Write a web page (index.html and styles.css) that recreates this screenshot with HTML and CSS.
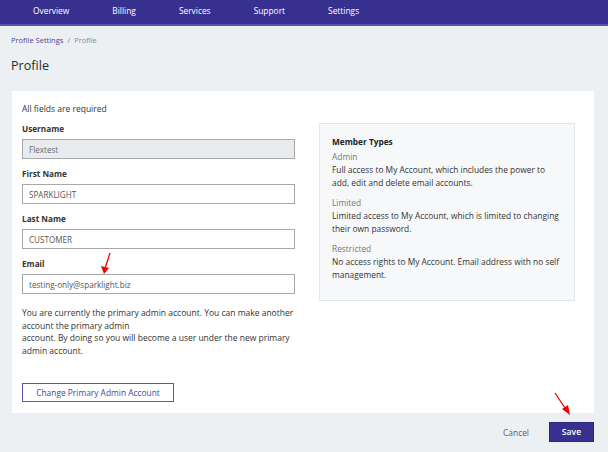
FILE: index.html
```html
<!DOCTYPE html>
<html>
<head>
<meta charset="utf-8">
<link rel="stylesheet" href="styles.css">
</head>
<body>
<nav class="topnav">
  <a class="nav-item">Overview</a>
  <a class="nav-item">Billing</a>
  <a class="nav-item">Services</a>
  <a class="nav-item">Support</a>
  <a class="nav-item">Settings</a>
</nav>
<main class="page">
  <div class="crumbs"><a class="crumb-link">Profile Settings</a><span class="crumb-sep">/</span><span class="crumb-cur">Profile</span></div>
  <h1 class="title">Profile</h1>
  <section class="card">
    <div class="form-col">
      <p class="req">All fields are required</p>
      <div class="field">
        <label class="lbl">Username</label>
        <input class="inp inp-disabled" value="Flextest" disabled>
      </div>
      <div class="field">
        <label class="lbl">First Name</label>
        <input class="inp" value="SPARKLIGHT">
      </div>
      <div class="field">
        <label class="lbl">Last Name</label>
        <input class="inp" value="CUSTOMER">
      </div>
      <div class="field">
        <label class="lbl">Email</label>
        <input class="inp" value="testing-only@sparklight.biz">
      </div>
      <p class="note">You are currently the primary admin account. You can make another account the primary admin<br>account. By doing so you will become a user under the new primary admin account.</p>
      <button class="btn-outline">Change Primary Admin Account</button>
    </div>
    <aside class="types">
      <h2 class="types-title">Member Types</h2>
      <div class="type">
        <div class="type-name">Admin</div>
        <div class="type-desc">Full access to My Account, which includes the power to add, edit and delete email accounts.</div>
      </div>
      <div class="type">
        <div class="type-name">Limited</div>
        <div class="type-desc">Limited access to My Account, which is limited to changing their own password.</div>
      </div>
      <div class="type">
        <div class="type-name">Restricted</div>
        <div class="type-desc">No access rights to My Account. Email address with no self management.</div>
      </div>
    </aside>
  </section>
  <div class="actions">
    <a class="cancel">Cancel</a>
    <button class="btn-save">Save</button>
  </div>
</main>
<svg class="annot" width="608" height="452" viewBox="0 0 608 452">
  <line x1="110" y1="253" x2="105.5" y2="267" stroke="#f00000" stroke-width="1.3"/>
  <polygon points="101,266 109,268 104,274" fill="#f00000"/>
  <line x1="555" y1="393" x2="565" y2="408" stroke="#f00000" stroke-width="1.3"/>
  <polygon points="562,409 568,405 570,415" fill="#f00000"/>
</svg>
</body>
</html>
```
FILE: styles.css
```css
* { box-sizing: border-box; }
html, body { margin: 0; padding: 0; }
body {
  background: #edf0f3;
  font-family: "Open Sans", "Noto Sans", sans-serif;
  color: #333;
  width: 608px;
  height: 452px;
  overflow: hidden;
  position: relative;
}
.topnav {
  display: flex;
  height: 26px;
  background: #37308f;
  border-bottom: 2px solid #5a53ad;
  padding-left: 33px;
  gap: 43px;
  align-items: center;
}
.nav-item {
  color: #fff;
  font-size: 8.4px;
  line-height: 14px;
  margin-top: -2px;
}
.page {
  padding: 0 14px 0 12px;
}
.crumbs {
  font-size: 7.5px;
  line-height: 12px;
  padding-top: 8px;
  margin-left: -1px;
  display: flex;
  gap: 4px;
}
.crumb-link { color: #4a4493; }
.crumb-sep, .crumb-cur { color: #8a8a8a; }
.title {
  font-weight: 400;
  font-size: 12.6px;
  line-height: 20px;
  margin: 10px 0 0 -1px;
  color: #2b2b2b;
}
.card {
  margin-top: 15px;
  background: #fff;
  padding: 11px 19px 11px 10px;
  display: flex;
  align-items: flex-start;
  gap: 24px;
}
.form-col {
  width: 273px;
  flex: none;
  display: flex;
  flex-direction: column;
}
.req {
  margin: 0 0 9px;
  font-size: 8.5px;
  line-height: 13px;
  color: #333;
}
.field {
  display: flex;
  flex-direction: column;
  gap: 5px;
  margin-bottom: 10px;
}
.lbl {
  font-size: 8.2px;
  font-weight: 700;
  line-height: 10px;
  color: #333;
}
.inp {
  height: 20px;
  width: 273px;
  border: 1px solid #a8a8a8;
  border-radius: 0;
  padding: 0 6px;
  font-family: inherit;
  font-size: 8.1px;
  color: #555;
  background: #fff;
  margin: 0;
  outline: none;
}
.inp-disabled {
  background: #e9ebee;
  color: #6a6a6a;
}
.note {
  margin: 3px 0 0;
  font-size: 8.5px;
  line-height: 12.6px;
  color: #333;
}
.btn-outline {
  margin-top: 26px;
  align-self: flex-start;
  height: 19px;
  width: 152px;
  background: #fff;
  border: 1px solid #5d56ac;
  color: #4a4493;
  font-family: inherit;
  font-size: 8.4px;
  padding: 0;
}
.types {
  margin-top: 21px;
  width: 256px;
  flex: none;
  height: 178px;
  background: #f7f8fa;
  border: 1px solid #e3e6ea;
  padding: 11px 12px 11px 12px;
}
.types-title {
  margin: 0 0 2px;
  font-size: 8.3px;
  font-weight: 700;
  line-height: 13px;
  color: #222;
}
.type { margin-bottom: 7px; }
.type-name {
  font-size: 8.4px;
  line-height: 13px;
  color: #777;
}
.type-desc {
  font-size: 8.4px;
  line-height: 13px;
  color: #333;
}
.actions {
  display: flex;
  justify-content: flex-end;
  align-items: center;
  gap: 20px;
  margin-top: 9px;
}
.cancel {
  color: #555a8a;
  font-size: 8.4px;
}
.btn-save {
  width: 45px;
  height: 20px;
  background: #37308f;
  color: #fff;
  border: 1px solid #2c2680;
  font-family: inherit;
  font-size: 8.6px;
  font-weight: 600;
  padding: 0;
}
.annot {
  position: absolute;
  left: 0;
  top: 0;
  pointer-events: none;
}
```
